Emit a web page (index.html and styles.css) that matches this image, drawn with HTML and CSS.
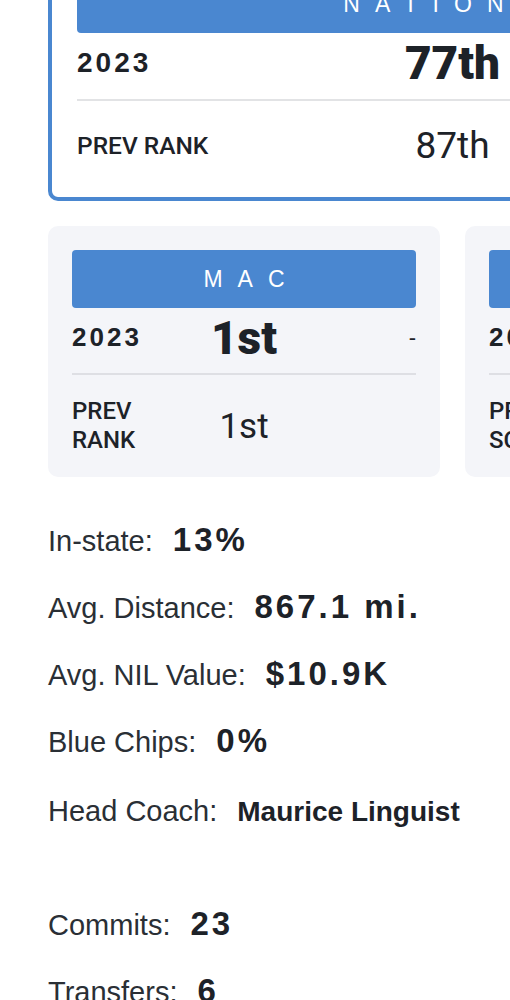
FILE: index.html
```html
<!DOCTYPE html>
<html lang="en">
<head>
    <meta charset="UTF-8">
    <meta name="viewport" content="width=device-width, initial-scale=1.0">
    <title>Team Rankings</title>
    <link rel="stylesheet" href="styles.css">
</head>
<body>
    <div class="page">
        <div class="rank-card national">
            <div class="banner">NATIONAL</div>
            <div class="rank-row">
                <span class="year">2023</span>
                <span class="rank">77th</span>
                <span class="change">+10</span>
            </div>
            <div class="prev-row">
                <span class="prev-label">PREV RANK</span>
                <span class="prev-value">87th</span>
                <span class="change"></span>
            </div>
        </div>

        <div class="card-grid">
            <div class="rank-card">
                <div class="banner">MAC</div>
                <div class="rank-row">
                    <span class="year">2023</span>
                    <span class="rank">1st</span>
                    <span class="change">-</span>
                </div>
                <div class="prev-row">
                    <span class="prev-label">PREV RANK</span>
                    <span class="prev-value">1st</span>
                    <span class="change"></span>
                </div>
            </div>
            <div class="rank-card">
                <div class="banner">SCORE</div>
                <div class="rank-row">
                    <span class="year">2023</span>
                    <span class="rank">84.2</span>
                    <span class="change">-</span>
                </div>
                <div class="prev-row">
                    <span class="prev-label">PREV SCORE</span>
                    <span class="prev-value">83.9</span>
                    <span class="change"></span>
                </div>
            </div>
        </div>

        <div class="stats">
            <div class="stat"><span class="label">In-state:</span><span class="value">13%</span></div>
            <div class="stat"><span class="label">Avg. Distance:</span><span class="value">867.1 mi.</span></div>
            <div class="stat"><span class="label">Avg. NIL Value:</span><span class="value">$10.9K</span></div>
            <div class="stat"><span class="label">Blue Chips:</span><span class="value">0%</span></div>
            <div class="stat coach"><span class="label">Head Coach:</span><span class="value name">Maurice Linguist</span></div>
        </div>

        <div class="stats counts">
            <div class="stat"><span class="label">Commits:</span><span class="value">23</span></div>
            <div class="stat"><span class="label">Transfers:</span><span class="value">6</span></div>
        </div>
    </div>
</body>
</html>
```

FILE: styles.css
```css
body {
    margin: 0;
    background: #fff;
    color: #1d2228;
    font-family: "Liberation Sans", Arial, sans-serif;
    overflow: hidden;
}
.page {
    width: 809px;
    margin: -53px 0 0 48px;
}
.rank-card {
    background: #f4f5f9;
    border-radius: 10px;
    padding: 24px 24px 0;
}
.rank-card.national {
    background: #fff;
    border: 4px solid #4a87d0;
    padding: 24px 25px 0;
    margin-bottom: 25px;
}
.banner {
    height: 58px;
    background: #4a87d0;
    border-radius: 4px;
    color: #fff;
    font-size: 23px;
    letter-spacing: 15px;
    text-indent: 15px;
    display: flex;
    align-items: center;
    justify-content: center;
}
.rank-row,
.prev-row {
    display: grid;
    grid-template-columns: 1fr 1fr 1fr;
    align-items: center;
}
.rank-row {
    height: 65px;
    padding-bottom: 6px;
    box-sizing: border-box;
}
.prev-row {
    border-top: 2px solid #dedfe4;
    padding: 22px 0;
}
.national .rank-row { height: 66px; }
.national .prev-row {
    border-top-color: #e2e3e5;
    height: 98px;
    padding: 0 0 7px;
    box-sizing: border-box;
}
.year {
    font-weight: bold;
    font-size: 26px;
    letter-spacing: 3px;
}
.national .year { font-size: 28px; }
.rank {
    font-family: Roboto, "Liberation Sans", sans-serif;
    font-weight: 900;
    font-size: 46px;
    text-align: center;
    line-height: 1;
}
.change {
    text-align: right;
    font-size: 22px;
}
.prev-label {
    font-family: Roboto, "Liberation Sans", sans-serif;
    font-weight: 500;
    font-size: 24px;
    line-height: 29px;
}
.national .prev-label { font-size: 24.5px; }
.prev-value {
    font-family: Roboto, "Liberation Sans", sans-serif;
    font-size: 35px;
    text-align: center;
}
.national .prev-value { font-size: 37px; }
.card-grid {
    display: grid;
    grid-template-columns: 1fr 1fr;
    gap: 25px;
}
.stats {
    margin-top: 30px;
}
.stat {
    line-height: 66px;
    font-size: 29px;
    white-space: nowrap;
}
.label {
    color: #2a2f35;
    margin-right: 20px;
}
.value {
    font-weight: bold;
    font-size: 33px;
    letter-spacing: 3px;
}
.value.name {
    font-size: 28px;
    letter-spacing: 0;
}
.coach { margin-top: 3px; }
.counts { margin-top: 46px; }
```
